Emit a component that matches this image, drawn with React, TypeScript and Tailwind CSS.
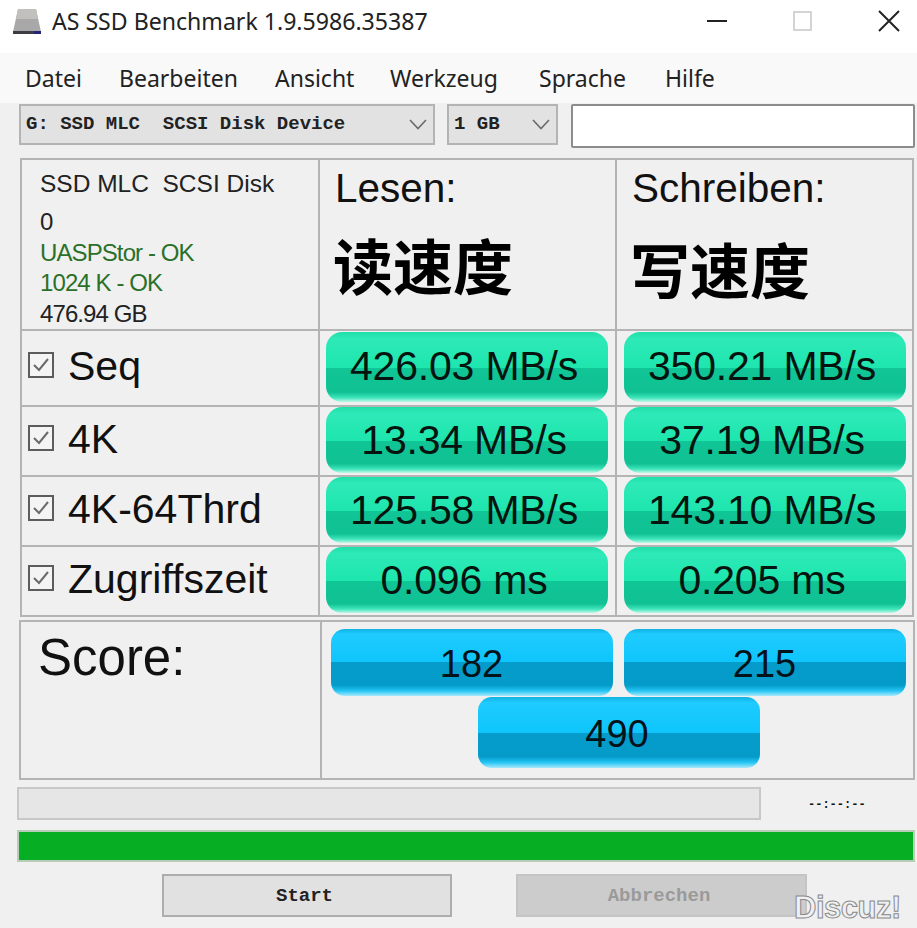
import React from 'react';

const rows = [
  { name: 'Seq', read: '426.03 MB/s', write: '350.21 MB/s', h: 'h-[76px]', bar: 'h-[70px] mt-[1px]' },
  { name: '4K', read: '13.34 MB/s', write: '37.19 MB/s', h: 'h-[70px]', bar: 'h-[66px] pt-[2px]' },
  { name: '4K-64Thrd', read: '125.58 MB/s', write: '143.10 MB/s', h: 'h-[70px]', bar: 'h-[66px] pt-[2px]' },
  { name: 'Zugriffszeit', read: '0.096 ms', write: '0.205 ms', h: 'h-[70px]', bar: 'h-[66px] pt-[2px]' },
];

const menus = [
  { label: 'Datei', cls: 'w-[94px]' },
  { label: 'Bearbeiten', cls: 'w-[156px]' },
  { label: 'Ansicht', cls: 'w-[115px]' },
  { label: 'Werkzeug', cls: 'w-[149px]' },
  { label: 'Sprache', cls: 'w-[126px]' },
  { label: 'Hilfe', cls: '' },
];

// glossy green bar of the result cells
function ResultBar({ value, cls }: { value: string; cls: string }) {
  return (
    <div
      className={`flex w-[282px] items-center justify-center rounded-[16px] bg-[linear-gradient(#1fdfa9_0%,#2ee9b8_10%,#1de6ad_52%,#10c596_52%,#10c193_86%,#3fe6bb_94%,#c4f6e7_100%)] pr-[6px] text-[41px] tracking-[-0.2px] text-[#06140f] ${cls}`}
    >
      {value}
    </div>
  );
}

// glossy blue bar of the score cells
function ScoreBar({ value, tall }: { value: number; tall?: boolean }) {
  return (
    <div
      className={`flex w-[282px] items-center justify-center rounded-[14px] bg-[linear-gradient(#10b2e2_0%,#1fcbff_8%,#0ec5fb_50%,#059ccb_50%,#059bc9_84%,#22c4f4_92%,#a9e9fb_100%)] text-[38px] text-[#04131a] ${tall ? 'h-[71px] pt-[3px] pr-[3px]' : 'h-[67px] pt-[3px]'}`}
    >
      {value}
    </div>
  );
}

function Check() {
  return (
    <svg width="26" height="26" viewBox="0 0 26 26" fill="none" className="shrink-0">
      <rect x="1" y="1" width="24" height="24" fill="#f4f4f4" stroke="#5c5c5c" strokeWidth="2" />
      <path d="M6 13l5 5 9-11" stroke="#6a6a6a" strokeWidth="2" />
    </svg>
  );
}

function Chevron() {
  return (
    <svg width="18" height="11" viewBox="0 0 18 11" fill="none" className="shrink-0">
      <path d="M1 1l8 8.5L17 1" stroke="#6a6a6a" strokeWidth="1.6" />
    </svg>
  );
}

export default function App() {
  return (
    <div className="relative flex h-[928px] w-[917px] flex-col overflow-hidden bg-[#f0f0f0] [font-family:'Liberation_Sans',Arial,sans-serif]">
      {/* Title bar */}
      <div className="flex h-[53px] items-center bg-white pb-[11px] pl-[12px] [font-family:'Noto_Sans',sans-serif]">
        <svg width="30" height="27" viewBox="0 0 30 27" className="shrink-0">
          <path d="M6 1h18l5 23H1z" fill="#a8a8a8" />
          <path d="M6 1h18l2 10H4z" fill="#c2c0bc" />
          <rect x="1" y="23" width="28" height="3" fill="#3c3c44" />
          <rect x="22" y="23" width="7" height="3" fill="#23237a" />
        </svg>
        <span className="ml-[10px] text-[23.1px] text-[#222]">AS SSD Benchmark 1.9.5986.35387</span>
        <div className="ml-auto flex items-center">
          <svg width="20" height="4" viewBox="0 0 20 4" className="mr-[66px]">
            <rect width="20" height="2" y="1" fill="#222" />
          </svg>
          <div className="mr-[66px] h-[20px] w-[19px] border-2 border-[#d4d4d4]" />
          <svg width="22" height="22" viewBox="0 0 22 22" fill="none" className="mr-[17px]">
            <path d="M1 1l20 20M21 1L1 21" stroke="#222" strokeWidth="2" />
          </svg>
        </div>
      </div>

      {/* Menu */}
      <div className="flex h-[50px] items-center bg-[#f9f9f9] pl-[25px] text-[23px] text-[#222] [font-family:'Noto_Sans',sans-serif]">
        {menus.map((m) => (
          <span key={m.label} className={m.cls}>
            {m.label}
          </span>
        ))}
      </div>

      {/* Drive and size selection */}
      <div className="flex h-[46px] items-start bg-[#f0f0f0] pl-[19px] text-[19px] font-bold text-[#222] [font-family:'Liberation_Mono',monospace]">
        <div className="mt-[1px] flex h-[41px] w-[416px] items-center justify-between border-2 border-[#b4b4b4] bg-[#e2e2e2] pl-[5px] pr-[6px]">
          <span className="whitespace-pre">G: SSD MLC  SCSI Disk Device</span>
          <Chevron />
        </div>
        <div className="ml-[12px] mt-[1px] flex h-[41px] w-[111px] items-center justify-between border-2 border-[#b4b4b4] bg-[#e2e2e2] pl-[5px] pr-[6px]">
          <span className="whitespace-pre">1 GB</span>
          <Chevron />
        </div>
        <div className="ml-[13px] mt-[1px] h-[44px] w-[344px] rounded-[2px] border-2 border-[#8c8c8c] bg-white" />
      </div>

      {/* Results table */}
      <div className="ml-[20px] mt-[9px] grid w-[894px] grid-cols-[298px_297px_299px] border-b-2 border-r-2 border-[#b4b4b4]">
        <div className="flex h-[171px] flex-col border-l-2 border-t-2 border-[#b4b4b4] pl-[18px] pt-[6px] text-[24px] leading-[36px] tracking-[-0.9px] text-[#222]">
          <span className="h-[38px] whitespace-pre text-[24.5px] tracking-normal">SSD MLC  SCSI Disk</span>
          <span className="h-[31px]">0</span>
          <span className="h-[30px] text-[#2a7029]">UASPStor - OK</span>
          <span className="h-[31px] text-[#2a7029]">1024 K - OK</span>
          <span className="h-[30px]">476.94 GB</span>
        </div>
        <div className="flex h-[171px] flex-col border-l-2 border-t-2 border-[#b4b4b4] pl-[15px] pt-[4px] text-[#111]">
          <span className="text-[40.5px] leading-[48px]">Lesen:</span>
          <span className="-ml-[2px] mt-[16px] text-[60px] font-bold leading-[72px] text-black [font-family:'Noto_Sans_CJK_SC',sans-serif]">读速度</span>
        </div>
        <div className="flex h-[171px] flex-col border-l-2 border-t-2 border-[#b4b4b4] pl-[15px] pt-[4px] text-[#111]">
          <span className="text-[40.5px] leading-[48px]">Schreiben:</span>
          <span className="-ml-[2px] mt-[20px] text-[60px] font-bold leading-[72px] text-black [font-family:'Noto_Sans_CJK_SC',sans-serif]">写速度</span>
        </div>
        {rows.map((r) => (
          <React.Fragment key={r.name}>
            <div className={`flex items-center gap-[14px] border-l-2 border-t-2 border-[#b4b4b4] pb-[6px] pl-[6px] text-[41px] text-[#111] ${r.h}`}>
              <Check />
              <span className="mt-[3px]">{r.name}</span>
            </div>
            <div className={`flex items-start border-l-2 border-t-2 border-[#b4b4b4] pl-[6px] ${r.h}`}>
              <ResultBar value={r.read} cls={r.bar} />
            </div>
            <div className={`flex items-start border-l-2 border-t-2 border-[#b4b4b4] pl-[7px] ${r.h}`}>
              <ResultBar value={r.write} cls={r.bar} />
            </div>
          </React.Fragment>
        ))}
      </div>

      {/* Score */}
      <div className="ml-[19px] mt-[3px] flex h-[160px] w-[896px] border-2 border-[#b4b4b4]">
        <div className="w-[299px] pl-[17px] pt-[4px] text-[51px] leading-[64px] text-[#111]">Score:</div>
        <div className="flex flex-1 flex-col items-center border-l-2 border-[#b4b4b4] pt-[7px]">
          <div className="flex gap-[11px] pl-[1px]">
            <ScoreBar value={182} />
            <ScoreBar value={215} />
          </div>
          <div className="mt-[1px] pl-[2px]">
            <ScoreBar value={490} tall />
          </div>
        </div>
      </div>

      {/* Progress */}
      <div className="ml-[17px] mt-[7px] flex items-center">
        <div className="h-[33px] w-[744px] border-2 border-[#c8c8c8] bg-[#e6e6e6]" />
        <span className="ml-[47px] pt-[3px] text-[12px] font-bold text-[#111] [font-family:'Liberation_Mono',monospace]">--:--:--</span>
      </div>
      <div className="ml-[17px] mt-[10px] h-[32px] w-[898px] border-2 border-[#b8ccb8] bg-[#06ae24]" />

      {/* Buttons */}
      <div className="ml-[162px] mt-[12px] flex gap-[64px] text-[19px] [font-family:'Liberation_Mono',monospace]">
        <div className="flex h-[43px] w-[290px] items-center justify-center border-2 border-[#adadad] bg-[#e1e1e1] pr-[5px] pt-[2px] font-bold text-[#222]">Start</div>
        <div className="flex h-[43px] w-[291px] items-center justify-center border-2 border-[#c4c4c4] bg-[#cccccc] pr-[5px] pt-[2px] font-bold text-[#9a9a9a]">Abbrechen</div>
      </div>

      {/* Forum watermark */}
      <span className="absolute left-[794px] top-[885px] text-[31px] font-bold tracking-[-0.5px] text-[#f0f0f0] [-webkit-text-stroke:1px_#8a8a8a]">Discuz!</span>
    </div>
  );
}
